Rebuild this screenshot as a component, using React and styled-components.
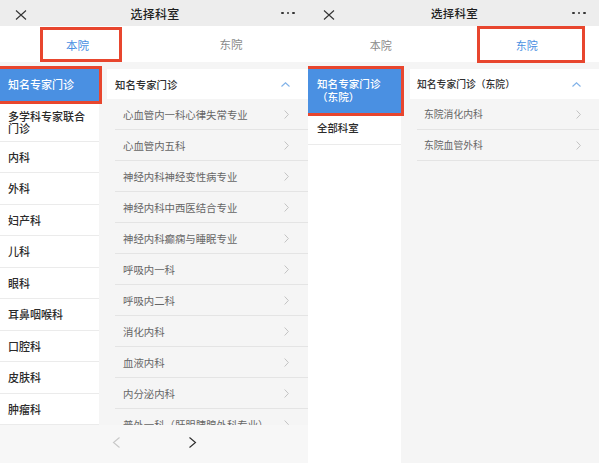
import React from 'react';
import styled, { createGlobalStyle } from 'styled-components';

const Global = createGlobalStyle`
  html, body { margin: 0; padding: 0; background: #f5f5f5; }
  body { font-family: "Noto Sans CJK SC", "Noto Sans", sans-serif; }
  * { box-sizing: border-box; }
`;

const Stage = styled.div`
  display: flex;
  width: 599px;
  height: 463px;
  overflow: hidden;
  background: #f5f5f5;
`;

const Phone = styled.div`
  flex: none;
  width: ${p => p.$w}px;
  height: 100%;
  display: flex;
  flex-direction: column;
  background: #f5f5f5;
  overflow: hidden;
`;

const NavBar = styled.div`
  flex: none;
  height: 26px;
  background: #ededed;
  display: grid;
  grid-template-columns: 1fr auto 1fr;
  align-items: center;
  padding: 0 13px 0 15px;
`;

const NavTitle = styled.div`
  font-size: ${p => p.$fs}px;
  font-weight: 500;
  color: #1f1f1f;
  letter-spacing: 0.3px;
`;

const NavRight = styled.div`
  display: flex;
  justify-content: flex-end;
  gap: 3px;
`;

const Dot = styled.span`
  width: 2.6px;
  height: 2.6px;
  border-radius: 50%;
  background: #333;
`;

const Tabs = styled.div`
  flex: none;
  height: 36px;
  background: #fff;
  display: grid;
  grid-template-columns: 1fr 1fr;
`;

const Tab = styled.div`
  display: flex;
  align-items: flex-end;
  justify-content: center;
`;

const TabLabel = styled.div`
  height: ${p => (p.$mark ? p.$mh : 36)}px;
  width: ${p => (p.$mark ? `${p.$mw}px` : 'auto')};
  display: flex;
  align-items: center;
  justify-content: center;
  font-size: ${p => p.$fs}px;
  color: ${p => (p.$active ? '#4a90e2' : '#8a8a8a')};
  border: ${p => (p.$mark ? '3px solid #e8462e' : 'none')};
  margin-left: ${p => (p.$mark ? p.$shift : 0)}px;
  padding-right: ${p => (p.$mark ? p.$shift - 1 : 0)}px;
  padding-bottom: ${p => (p.$mark ? 0 : 1)}px;
`;

const Body = styled.div`
  flex: 1;
  min-height: 0;
  margin-top: 7px;
  display: flex;
  align-items: stretch;
`;

const Sidebar = styled.div`
  flex: none;
  width: ${p => p.$w}px;
  background: #fff;
  display: flex;
  flex-direction: column;
`;

const SideItem = styled.div`
  padding: 9px ${p => p.$pad}px;
  line-height: 12.5px;
  min-height: 31.5px;
  font-size: ${p => p.$fs}px;
  font-weight: 500;
  color: ${p => (p.$active ? '#fff' : '#2b2b2b')};
  background: ${p => (p.$active ? '#4a90e2' : '#fff')};
  border-bottom: 1px solid ${p => (p.$active ? '#4a90e2' : '#ebebeb')};
  outline: ${p => (p.$mark ? '3px solid #e8462e' : 'none')};
  outline-offset: 0;
  position: relative;
  z-index: ${p => (p.$mark ? 1 : 0)};
`;

const Content = styled.div`
  flex: 1;
  min-width: 0;
  margin-left: ${p => p.$gap}px;
  display: flex;
  flex-direction: column;
`;

const ContentHeader = styled.div`
  flex: none;
  height: 30px;
  background: #fff;
  display: flex;
  align-items: center;
  justify-content: space-between;
  padding: 0 ${p => p.$pr}px 0 ${p => p.$pl}px;
  font-size: ${p => p.$fs}px;
  font-weight: 500;
  color: #2e2e2e;
  white-space: nowrap;
`;

const ListItem = styled.div`
  flex: none;
  height: 31px;
  margin-left: ${p => p.$pl}px;
  padding: 0 ${p => p.$pr}px 0 ${p => p.$pl}px;
  border-bottom: 1px solid #e4e4e4;
  display: flex;
  align-items: center;
  justify-content: space-between;
  font-size: ${p => p.$fs}px;
  color: #666;
  white-space: nowrap;
`;

const Footer = styled.div`
  flex: none;
  height: 38px;
  background: #f7f7f7;
  position: relative;
  z-index: 2;
  display: flex;
  justify-content: center;
  align-items: flex-start;
  padding-top: 12px;
  gap: 67px;
`;

const CloseIcon = () => (
  <svg width="12" height="10" viewBox="0 0 12 10">
    <path d="M1 0.5 L11 9.5 M11 0.5 L1 9.5" stroke="#333" strokeWidth="1.1" fill="none" />
  </svg>
);

const Chevron = ({ color = '#bdbdbd' }) => (
  <svg width="5" height="9" viewBox="0 0 5 9">
    <path d="M0.6 0.5 L4.4 4.5 L0.6 8.5" stroke={color} strokeWidth="0.9" fill="none" />
  </svg>
);

const UpChevron = () => (
  <svg width="9" height="5" viewBox="0 0 9 5">
    <path d="M0.5 4.5 L4.5 0.8 L8.5 4.5" stroke="#7fb1e8" strokeWidth="1.1" fill="none" />
  </svg>
);

const NavArrow = ({ dir, color }) => (
  <svg width="9" height="11" viewBox="0 0 9 11">
    <path
      d={dir === 'left' ? 'M7.5 0.5 L1.5 5.5 L7.5 10.5' : 'M1.5 0.5 L7.5 5.5 L1.5 10.5'}
      stroke={color}
      strokeWidth="1.1"
      fill="none"
    />
  </svg>
);

const Header = ({ fs }) => (
  <NavBar>
    <div><CloseIcon /></div>
    <NavTitle $fs={fs}>选择科室</NavTitle>
    <NavRight><Dot /><Dot /><Dot /></NavRight>
  </NavBar>
);

const leftSide = ['知名专家门诊', '多学科专家联合门诊', '内科', '外科', '妇产科', '儿科', '眼科', '耳鼻咽喉科', '口腔科', '皮肤科', '肿瘤科'];
const leftList = [
  '心血管内一科心律失常专业',
  '心血管内五科',
  '神经内科神经变性病专业',
  '神经内科中西医结合专业',
  '神经内科癫痫与睡眠专业',
  '呼吸内一科',
  '呼吸内二科',
  '消化内科',
  '血液内科',
  '内分泌内科',
  '普外一科（肝胆胰腺外科专业）',
  '普外二科',
];

const rightList = ['东院消化内科', '东院血管外科'];

export default function App() {
  return (
    <>
      <Global />
      <Stage>
        <Phone $w={308}>
          <Header fs={12} />
          <Tabs>
            <Tab>
              <TabLabel $active $mark $mw={82} $mh={35} $shift={8} $fs={11.5}>本院</TabLabel>
            </Tab>
            <Tab>
              <TabLabel $fs={11.5}>东院</TabLabel>
            </Tab>
          </Tabs>
          <Body>
            <Sidebar $w={99}>
              {leftSide.map((name, i) => (
                <SideItem key={name} $active={i === 0} $mark={i === 0} $pad={8} $fs={11}>
                  {name}
                </SideItem>
              ))}
            </Sidebar>
            <Content $gap={8}>
              <ContentHeader $pl={8} $pr={18} $fs={10.4}>
                知名专家门诊
                <UpChevron />
              </ContentHeader>
              {leftList.map(name => (
                <ListItem key={name} $pl={8} $pr={19} $fs={10.4}>
                  {name}
                  <Chevron />
                </ListItem>
              ))}
            </Content>
          </Body>
          <Footer>
            <NavArrow dir="left" color="#c8c8c8" />
            <NavArrow dir="right" color="#2b2b2b" />
          </Footer>
        </Phone>
        <Phone $w={291}>
          <Header fs={11.5} />
          <Tabs>
            <Tab>
              <TabLabel $fs={11} >本院</TabLabel>
            </Tab>
            <Tab>
              <TabLabel $active $mark $mw={108} $mh={37} $shift={9} $fs={11}>东院</TabLabel>
            </Tab>
          </Tabs>
          <Body>
            <Sidebar $w={93}>
              <SideItem $active $mark $pad={9} $fs={10.6}>知名专家门诊（东院）</SideItem>
              <SideItem $pad={9} $fs={10.4}>全部科室</SideItem>
            </Sidebar>
            <Content $gap={9}>
              <ContentHeader $pl={7} $pr={18} $fs={9.8}>
                知名专家门诊（东院）
                <UpChevron />
              </ContentHeader>
              {rightList.map(name => (
                <ListItem key={name} $pl={7} $pr={18} $fs={9.8}>
                  {name}
                  <Chevron />
                </ListItem>
              ))}
            </Content>
          </Body>
        </Phone>
      </Stage>
    </>
  );
}
